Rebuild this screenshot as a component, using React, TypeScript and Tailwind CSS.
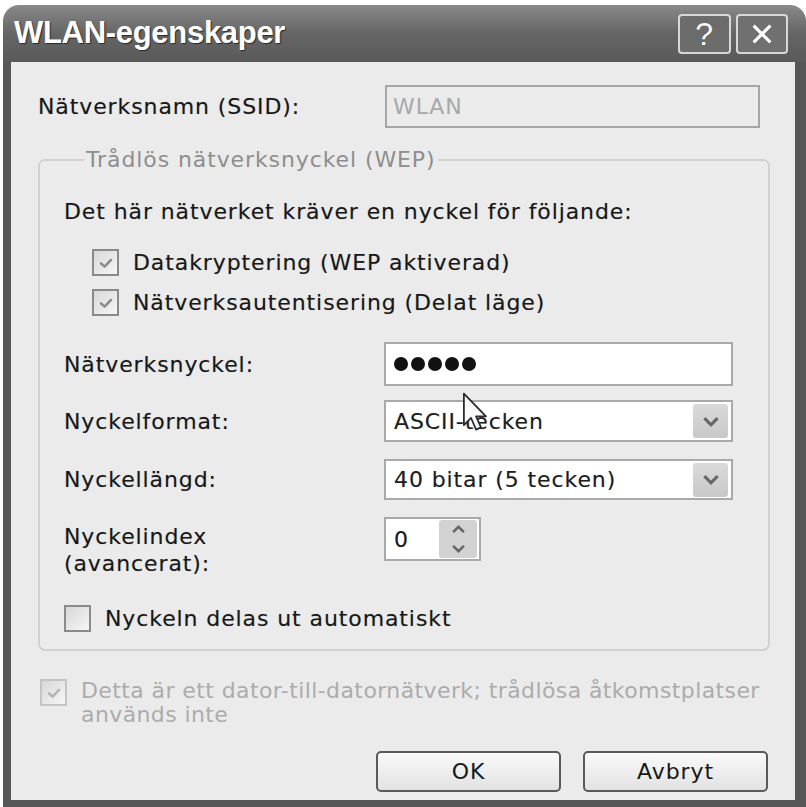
import React from "react";

const FONT = "font-['DejaVu_Sans',sans-serif]";

function Tick({ color = "#8a8a8a" }: { color?: string }) {
  return (
    <svg viewBox="0 0 20 20" className="h-[18px] w-[18px]">
      <path d="M4.5 10.5 L8.5 14 L15.5 6.5" fill="none" stroke={color} strokeWidth="2.8" strokeLinecap="round" strokeLinejoin="round" />
    </svg>
  );
}

function Box({ checked, dim }: { checked?: boolean; dim?: boolean }) {
  return (
    <span
      className={
        "flex h-[27px] w-[27px] shrink-0 items-center justify-center border-2 bg-gradient-to-br from-[#d8d8d8] to-[#f6f6f6] " +
        (dim ? "border-[#c4c4c4]" : "border-[#8a8a8a]")
      }
    >
      {checked && <Tick color={dim ? "#b4b4b4" : "#8c8c8c"} />}
    </span>
  );
}

function Chevron({ up, big }: { up?: boolean; big?: boolean }) {
  return (
    <svg viewBox="0 0 16 10" className={big ? "h-[11px] w-[18px]" : "h-[9px] w-[15px]"}>
      <path d={up ? "M2 8 L8 2 L14 8" : "M2 2 L8 8 L14 2"} fill="none" stroke="#666666" strokeWidth="2.8" />
    </svg>
  );
}

function Combo({ value, h }: { value: string; h: string }) {
  return (
    <div className={"flex w-[349px] items-center justify-between border-2 border-[#a9a9a9] bg-white pl-[8px] pr-[3px] " + h}>
      <span className="text-[#1e1e1e]">{value}</span>
      <span className="flex h-[34px] w-[35px] items-center justify-center rounded-[3px] bg-gradient-to-b from-[#dadada] to-[#c8c8c8]">
        <Chevron big />
      </span>
    </div>
  );
}

function Cursor() {
  return (
    <svg viewBox="0 0 24 38" className="pointer-events-none absolute left-[462px] top-[392px] h-[42px] w-[27px]">
      <path d="M1.5 1.5 L1.5 30 L8 23.5 L12.5 34 L17 32 L12.5 22 L21.5 22 Z" fill="#fafafa" stroke="#2a2a2a" strokeWidth="1.6" strokeLinejoin="round" />
    </svg>
  );
}

export default function App() {
  return (
    <div className={"relative h-[807px] w-[806px] overflow-hidden bg-white text-[22px] tracking-[0.9px] text-[#181818] [text-shadow:0_0_1px_rgba(0,0,0,0.25)] " + FONT}>
      <div className="ml-[3px] mt-[5px] flex h-[802px] flex-col overflow-hidden rounded-t-[16px]">
        {/* Title bar */}
        <div className="flex h-[57px] shrink-0 items-center justify-between bg-gradient-to-b from-[#8a8a8a] via-[#656565] to-[#5a5a5a] pl-[11px] pr-[18px]">
          <span className="mb-[1px] font-['Liberation_Sans',sans-serif] text-[31px] font-bold tracking-[-0.3px] text-white [text-shadow:1px_1px_1px_#2a2a2a]">
            WLAN-egenskaper
          </span>
          <div className="flex gap-[5px]">
            <span className="flex h-[40px] w-[53px] items-center justify-center rounded-[4px] border-2 border-[#d8d8d8] bg-[#6c6c6c] font-['Liberation_Sans',sans-serif] text-[32px] leading-none text-white">
              ?
            </span>
            <span className="flex h-[40px] w-[52px] items-center justify-center rounded-[4px] border-2 border-[#d8d8d8] bg-[#707070]">
              <svg viewBox="0 0 20 20" className="h-[24px] w-[24px]">
                <path d="M3 3 L17 17 M17 3 L3 17" stroke="#ffffff" strokeWidth="2.6" />
              </svg>
            </span>
          </div>
        </div>

        {/* Body */}
        <div className="flex flex-1 flex-col border-b-[7px] border-l-[8px] border-r-[11px] border-[#575757] bg-[#ebebeb] pl-[27px] pr-[25px]">
          <div className="mt-[23px] flex h-[43px] items-center">
            <span className="w-[347px]">Nätverksnamn (SSID):</span>
            <div className="flex h-[43px] w-[375px] items-center border-2 border-[#a6a6a6] bg-[#ebebeb] pl-[6px] text-[#a8a8a8] [text-shadow:none]">
              WLAN
            </div>
          </div>

          <fieldset className="mt-[19px] rounded-[7px] border-2 border-[#d2d2d2] pb-[17px] pl-[24px] pr-[20px]">
            <legend className="ml-[20px] px-[2px] leading-[26px] text-[#8e8e8e] [text-shadow:none]">Trådlös nätverksnyckel (WEP)</legend>

            <div className="mt-[25px] leading-[27px]">Det här nätverket kräver en nyckel för följande:</div>

            <div className="mt-[24px] flex flex-col gap-[13px] pl-[28px]">
              <label className="flex h-[27px] items-center gap-[14px]">
                <Box checked />
                <span>Datakryptering (WEP aktiverad)</span>
              </label>
              <label className="flex h-[27px] items-center gap-[14px]">
                <Box checked />
                <span>Nätverksautentisering (Delat läge)</span>
              </label>
            </div>

            <div className="mt-[26px] flex items-center">
              <span className="w-[320px]">Nätverksnyckel:</span>
              <div className="flex h-[44px] w-[349px] items-center gap-[3px] border-2 border-[#a9a9a9] bg-white pl-[8px]">
                {[0, 1, 2, 3, 4].map((i) => (
                  <span key={i} className="h-[14px] w-[14px] rounded-full bg-[#111]" />
                ))}
              </div>
            </div>

            <div className="mt-[14px] flex items-center">
              <span className="w-[320px]">Nyckelformat:</span>
              <Combo value="ASCII-tecken" h="h-[42px]" />
            </div>

            <div className="mt-[17px] flex items-center">
              <span className="w-[320px]">Nyckellängd:</span>
              <Combo value="40 bitar (5 tecken)" h="h-[41px]" />
            </div>

            <div className="mt-[17px] flex items-start">
              <span className="mt-[6px] w-[320px] leading-[27px]">
                Nyckelindex
                <br />
                (avancerat):
              </span>
              <div className="flex h-[44px] w-[97px] items-center justify-between border-2 border-[#a9a9a9] bg-white pl-[8px] pr-[2px]">
                <span>0</span>
                <div className="flex h-[38px] w-[38px] flex-col overflow-hidden rounded-[3px] bg-[#d2d2d2]">
                  <span className="flex flex-1 items-center justify-center">
                    <Chevron up />
                  </span>
                  <span className="flex flex-1 items-center justify-center">
                    <Chevron />
                  </span>
                </div>
              </div>
            </div>

            <label className="mt-[28px] flex h-[27px] items-center gap-[14px]">
              <Box />
              <span>Nyckeln delas ut automatiskt</span>
            </label>
          </fieldset>

          <div className="ml-[2px] mt-[28px] flex items-start gap-[14px] text-[#acacac] [text-shadow:none]">
            <Box checked dim />
            <span className="whitespace-nowrap leading-[24px] tracking-[0.4px]">
              Detta är ett dator-till-datornätverk; trådlösa åtkomstplatser
              <br />
              används inte
            </span>
          </div>

          <div className="mt-[24px] flex justify-end gap-[22px] pr-[2px]">
            <button className="h-[41px] w-[185px] rounded-[5px] border-2 border-[#5a5a5a] bg-gradient-to-b from-[#fafafa] to-[#e2e2e2] text-[22px]">
              OK
            </button>
            <button className="h-[41px] w-[185px] rounded-[5px] border-2 border-[#5a5a5a] bg-gradient-to-b from-[#fafafa] to-[#e2e2e2] text-[22px]">
              Avbryt
            </button>
          </div>
        </div>
      </div>
      <Cursor />
    </div>
  );
}
